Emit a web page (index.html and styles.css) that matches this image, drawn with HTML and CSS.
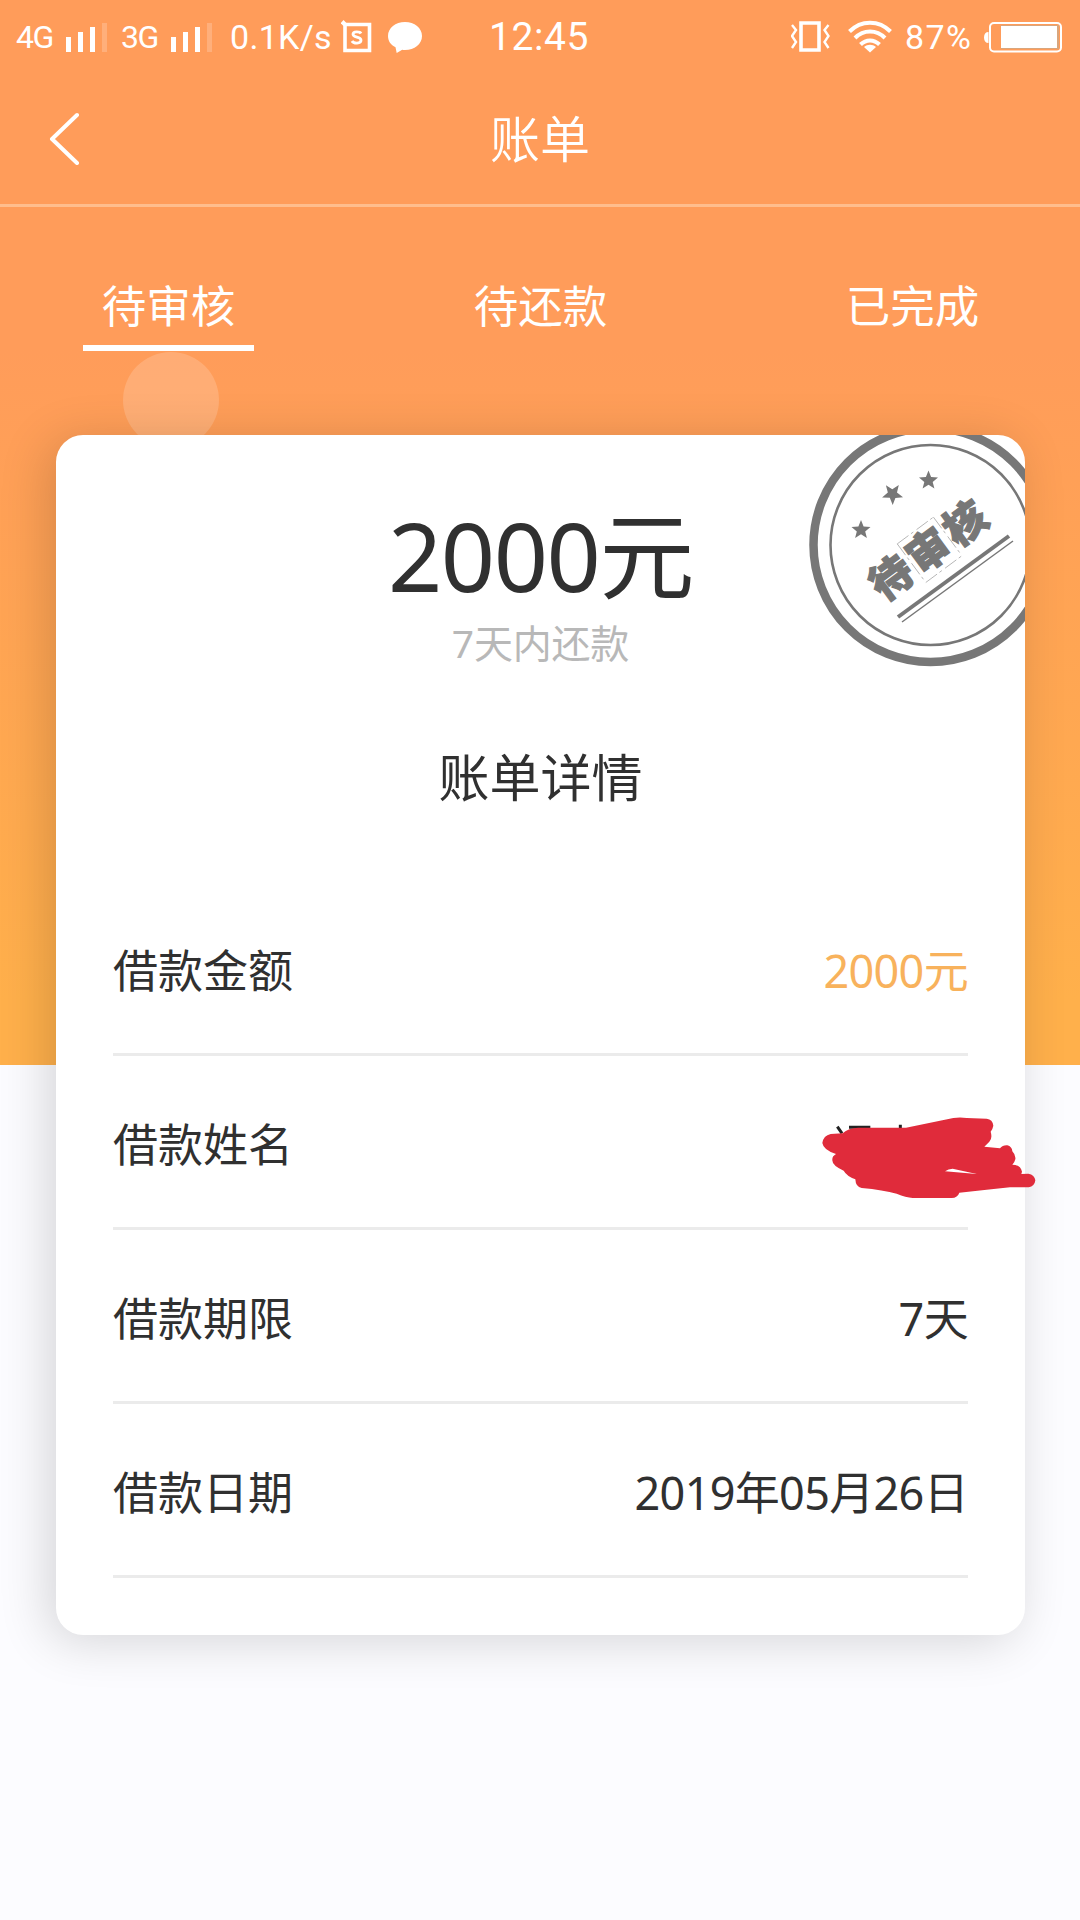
FILE: index.html
```html
<!DOCTYPE html>
<html lang="zh-CN">
<head>
    <meta charset="UTF-8">
    <meta name="viewport" content="width=device-width, initial-scale=1.0">
    <title>账单</title>
    <link rel="stylesheet" href="styles.css">
</head>
<body>

    <div class="page">
        <div class="status-bar">
            <div class="status-left">
                <span class="network">4G</span>
                <svg class="signal" width="42" height="32" viewBox="0 0 42 32" fill="#fff">
                    <path d="M1 16h5v15H1zM13 11h5v20h-5zM25 6h5v25h-5z"/>
                    <path d="M37 2h5v29h-5z" opacity=".2"/>
                </svg>
                <span class="network">3G</span>
                <svg class="signal" width="42" height="32" viewBox="0 0 42 32" fill="#fff">
                    <path d="M1 16h5v15H1zM13 11h5v20h-5zM25 6h5v25h-5z"/>
                    <path d="M37 2h5v29h-5z" opacity=".2"/>
                </svg>
                <span class="speed">0.1K/s</span>
                <svg class="app-icon" width="32" height="34" viewBox="0 0 32 34" fill="none" stroke="#fff">
                    <path d="M4 4.500h24.500v26H4z" stroke-width="3.600"/>
                    <path d="M1 4.500L4 1.500" stroke-width="4"/>
                    <path d="M20 13.500c-1-2-8-2.500-8 .8 0 3.700 8 2 8 6 0 3.700-7.500 3.500-9 .7" stroke-width="2.800"/>
                </svg>
                <svg class="chat-icon" width="34" height="32" viewBox="0 0 34 32" fill="#fff">
                    <path d="M17 1C7.500 1 0 7 0 15c0 5 2.800 9 7.500 11.200L8.700 32l5.500-3.300c1 .2 1.800.3 2.800.3 9.500 0 17-6 17-14S26.500 1 17 1z"/>
                </svg>
            </div>
            <span class="time">12:45</span>
            <div class="status-right">
                <svg width="39" height="34" viewBox="0 0 39 34" fill="none" stroke="#fff">
                    <path d="M10 3h18v27H10z" stroke-width="3.600"/>
                    <path d="M1 5l4 5-4 6 4 6-4 6M37.500 5l-4 5 4 6-4 6 4 6" stroke-width="2.400"/>
                </svg>
                <svg class="wifi" width="44" height="34" viewBox="0 0 44 34" fill="none" stroke="#fff" stroke-width="4">
                    <path d="M1.500 11.500C13-.3 31-.3 42.500 11.500M7 18c8.500-8.700 21.500-8.700 30 0M12.500 24.500c5.500-5.500 13.500-5.500 19 0"/>
                    <path d="M22 32.500l-6-5.500c3.500-3 8.500-3 12 0z" fill="#fff" stroke="none"/>
                </svg>
                <span class="percent">87%</span>
                <svg class="battery" width="78" height="32" viewBox="0 0 78 32">
                    <path d="M4.500 11v11C1.500 22 0 20 0 16.500S1.500 11 4.500 11z" fill="#fff"/>
                    <rect x="6" y="2" width="71" height="28.500" rx="4" fill="none" stroke="#fff" stroke-width="2"/>
                    <path d="M17 4h58v24H17z" fill="#d9a67c"/>
                    <path d="M17 5h56v22H17z" fill="#fff"/>
                </svg>
            </div>
        </div>

        <div class="nav-bar">
            <a class="back" href="#">
                <svg width="32" height="54" viewBox="0 0 32 54" fill="none" stroke="#fff" stroke-width="4" stroke-linecap="round" stroke-linejoin="round">
                    <path d="M29 4L4 28l25 24"/>
                </svg>
            </a>
            <h1>账单</h1>
        </div>

        <div class="tabs">
            <a class="tab active" href="#">待审核</a>
            <a class="tab" href="#">待还款</a>
            <a class="tab" href="#">已完成</a>
            <span class="touch-dot"></span>
        </div>

        <div class="card">
            <!-- 状态印章 -->
            <svg class="stamp" width="225" height="240" viewBox="800 435 225 240" fill="#777" stroke="#777">
                <circle cx="930.500" cy="545" r="117" fill="none" stroke-width="8.500"/>
                <circle cx="930.500" cy="545" r="100" fill="none" stroke-width="2.600"/>
                <g stroke="none">
                    <path d="M0-10L2.600-3.400 9.500-3.100 4.200 1.400 5.900 8.100 0 4.300-5.900 8.100-4.200 1.400-9.500-3.100-2.600-3.400z" transform="translate(861 530)"/>
                    <path d="M0-10L2.600-3.400 9.500-3.100 4.200 1.400 5.900 8.100 0 4.300-5.900 8.100-4.200 1.400-9.500-3.100-2.600-3.400z" transform="translate(892.500 494) rotate(35) scale(1.100)"/>
                    <path d="M0-10L2.600-3.400 9.500-3.100 4.200 1.400 5.900 8.100 0 4.300-5.900 8.100-4.200 1.400-9.500-3.100-2.600-3.400z" transform="translate(928.500 480.500)"/>
                </g>
                <g transform="translate(930 549.500) rotate(-36.500)">
                    <text class="stamp-text" x="0" y="15" text-anchor="middle" stroke-width="1.200">待审核</text>
                    <path d="M-23-24h45M-23-24v48M-23 24h45M22-24v48" fill="none" stroke-width=".7" stroke-dasharray="14 3 3 4" opacity=".7"/>
                </g>
                <path d="M898 617l111-81" stroke-width="4"/>
                <path d="M902 622l111-81" stroke-width="1.500"/>
            </svg>

            <div class="amount">2000元</div>
            <div class="period">7天内还款</div>
            <h2>账单详情</h2>

            <div class="list">
                <div class="row">
                    <span class="label">借款金额</span>
                    <span class="value highlight">2000元</span>
                </div>
                <div class="row">
                    <span class="label">借款姓名</span>
                    <!-- 姓名涂抹 -->
                    <svg class="scribble" width="300" height="160" viewBox="0 0 900 480">
                        <path d="M172 140l14 20M207 142h64M361 134v10" fill="none" stroke="#222" stroke-width="9"/>
                        <path fill="#e02b3b" fill-rule="evenodd" d="M152 162L188 160Q205 144 235 143H378L520 114Q540 111 560 114L620 116Q638 118 640 137Q638 148 632 155Q638 175 628 185L613 200L660 205Q668 195 682 196Q696 200 697 214Q708 225 706 238Q704 247 697 254Q721 254 726 275L724 282L745 281Q764 284 766 301Q764 319 746 322H690L620 329L538 338Q533 353 515 354H398Q378 352 350 341Q310 330 245 324Q227 321 226 298Q200 288 191 272Q155 256 157 239Q156 229 168 222Q130 210 127 189Q130 167 152 162ZM495 274L590 282L518 266Q505 267 495 274Z"/>
                    </svg>
                </div>
                <div class="row">
                    <span class="label">借款期限</span>
                    <span class="value">7天</span>
                </div>
                <div class="row">
                    <span class="label">借款日期</span>
                    <span class="value">2019年05月26日</span>
                </div>
            </div>
        </div>
    </div>

</body>
</html>
```

FILE: styles.css
```css
* {
    margin: 0;
    padding: 0;
    box-sizing: border-box;
}

body {
    font-family: "Noto Sans", "Noto Sans CJK SC", sans-serif;
    background-color: #fcfcff;
    color: #303030;
}

a {
    color: inherit;
    text-decoration: none;
}

svg {
    display: block;
    flex: none;
}

.page {
    height: 1920px;
    overflow: hidden;
    background: linear-gradient(#ff9c5a 0, #ff9c5a 350px, #ffb04b 1000px, #ffb04b 1065px) no-repeat;
    background-size: 100% 1065px;
}

/* 状态栏 */
.status-bar {
    display: grid;
    grid-template-columns: 1fr auto 1fr;
    align-items: center;
    height: 72px;
    padding: 1px 18px 0 16px;
    font-family: Roboto, sans-serif;
    color: #fff;
}

.status-left,
.status-right {
    display: flex;
    align-items: center;
}

.status-right {
    justify-content: flex-end;
}

.network {
    width: 49px;
    font-size: 32px;
    letter-spacing: -1.5px;
}

.signal {
    margin-right: 14px;
}

.speed {
    width: 111px;
    margin-left: 4px;
    font-size: 34px;
    letter-spacing: 0.3px;
}

.chat-icon {
    margin-left: 15px;
}

.time {
    font-size: 39px;
    letter-spacing: 0.6px;
}

.wifi {
    margin-left: 18px;
}

.percent {
    width: 81px;
    padding-left: 13px;
    font-size: 34px;
    letter-spacing: 1.4px;
}

.battery {
    margin-left: 11px;
}

/* 导航 */
.nav-bar {
    display: grid;
    grid-template-columns: 1fr auto 1fr;
    align-items: center;
    height: 135px;
    padding: 0 48px;
    border-bottom: 3px solid #ffbd8d;
    color: #fff;
}

.nav-bar h1 {
    padding-top: 2px;
    font-size: 50px;
    line-height: 60px;
    font-weight: 350;
}

/* 标签 */
.tabs {
    position: relative;
    display: flex;
    justify-content: space-between;
    padding: 69px 82px 0 83px;
    color: #fff;
}

.tab {
    width: 171px;
    height: 75px;
    border-bottom: 6px solid transparent;
    font-size: 44.5px;
    line-height: 60px;
    text-align: center;
}

.tab.active {
    border-bottom-color: #fff;
}

.touch-dot {
    position: absolute;
    left: 123px;
    top: 145px;
    width: 96px;
    height: 96px;
    border-radius: 50%;
    background: rgba(255, 255, 255, 0.17);
}

/* 账单卡片 */
.card {
    position: relative;
    height: 1200px;
    margin: 84px 55px 0 56px;
    padding: 70px 57px 0;
    border-radius: 27px;
    background: #fff;
    box-shadow: -8px 6px 50px rgba(0, 0, 0, 0.16);
    text-align: center;
}

.stamp {
    position: absolute;
    top: 0;
    right: 0;
    border-top-right-radius: 27px;
}

.stamp-text {
    font-family: "Noto Sans CJK SC", sans-serif;
    font-size: 42px;
    font-weight: 900;
    letter-spacing: 4px;
}

.amount {
    font-size: 95px;
    line-height: 100px;
    letter-spacing: -0.015em;
}

.period {
    margin-top: 13px;
    font-size: 39px;
    line-height: 50px;
    letter-spacing: -0.2px;
    color: #b8b8b8;
}

.card h2 {
    margin-top: 79px;
    font-size: 51px;
    line-height: 60px;
    font-weight: 400;
}

.list {
    margin-top: 75px;
}

.row {
    position: relative;
    display: flex;
    justify-content: space-between;
    align-items: center;
    height: 174px;
    padding-top: 6px;
    border-bottom: 3px solid #ebebeb;
    font-size: 45px;
    line-height: 60px;
}

.value {
    letter-spacing: -0.015em;
}

.highlight {
    color: #f8b25c;
}

.scribble {
    position: absolute;
    top: 24px;
    right: -112px;
}
```
